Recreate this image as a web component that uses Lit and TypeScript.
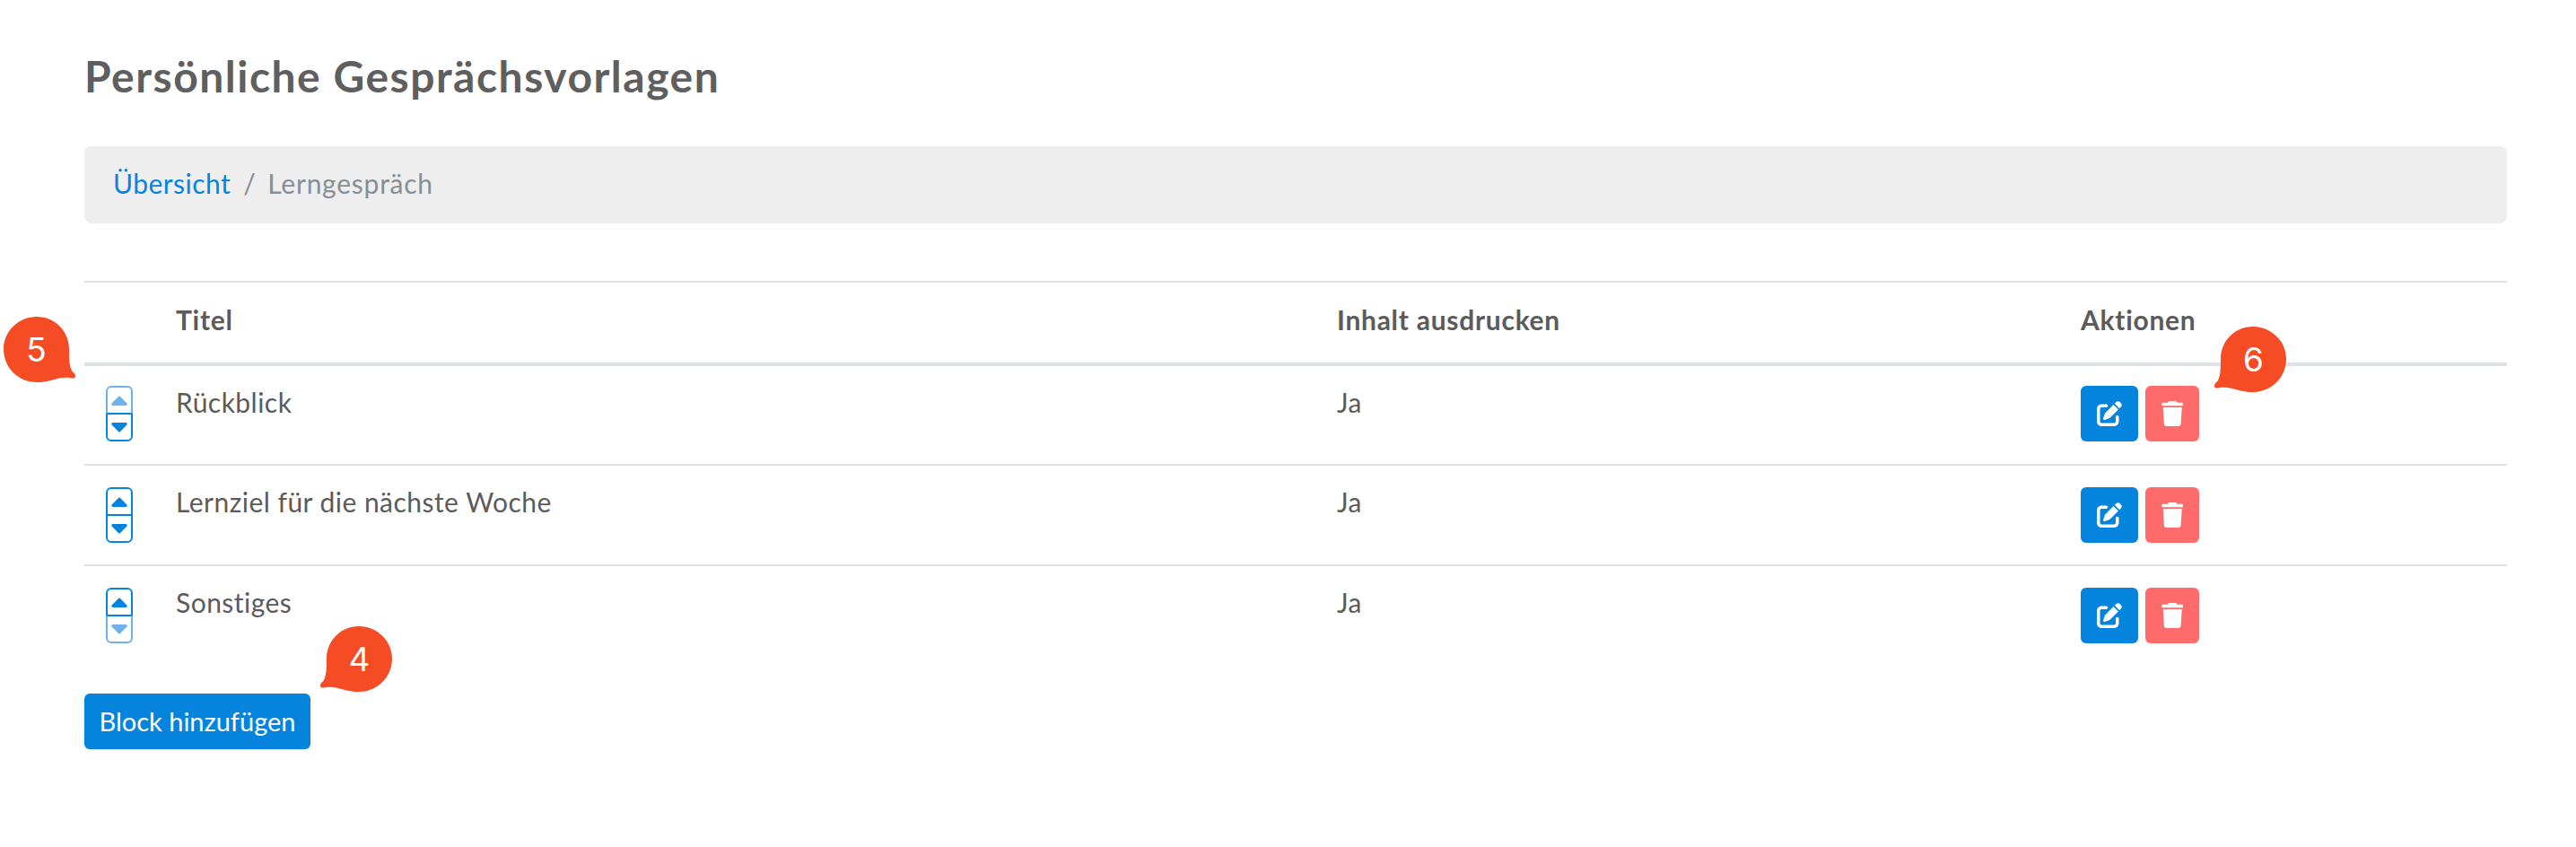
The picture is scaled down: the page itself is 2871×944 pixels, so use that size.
import { LitElement, html, css, svg } from "lit";
import { customElement } from "lit/decorators.js";

const rows = [
  { title: "Rückblick", print: "Ja", upOff: true, downOff: false },
  { title: "Lernziel für die nächste Woche", print: "Ja", upOff: false, downOff: false },
  { title: "Sonstiges", print: "Ja", upOff: false, downOff: true },
];

const editIcon = svg`<path d="M471.6 21.7c-21.9-21.9-57.3-21.9-79.2 0L362.3 51.7l97.9 97.9 30.1-30.1c21.9-21.9 21.9-57.3 0-79.2L471.6 21.7zm-299.2 220c-6.1 6.1-10.8 13.6-13.5 21.9l-29.6 88.8c-2.9 8.6-.6 18.1 5.8 24.6s15.9 8.7 24.6 5.8l88.8-29.6c8.2-2.7 15.7-7.4 21.9-13.5L437.7 172.3 339.7 74.3 172.4 241.7zM96 64C43 64 0 107 0 160V416c0 53 43 96 96 96H352c53 0 96-43 96-96V320c0-17.7-14.3-32-32-32s-32 14.3-32 32v96c0 17.7-14.3 32-32 32H96c-17.7 0-32-14.3-32-32V160c0-17.7 14.3-32 32-32h96c17.7 0 32-14.3 32-32s-14.3-32-32-32H96z"/>`;
const trashIcon = svg`<path d="M135.2 17.7L128 32H32C14.3 32 0 46.3 0 64S14.3 96 32 96H416c17.7 0 32-14.3 32-32s-14.3-32-32-32H320l-7.2-14.3C307.4 6.8 296.3 0 284.2 0H163.8c-12.1 0-23.2 6.8-28.6 17.7zM416 128H32L53.2 467c1.6 25.3 22.6 45 47.9 45H346.9c25.3 0 46.3-19.7 47.9-45L416 128z"/>`;

// speech bubble, tail at the lower right; .left mirrors it
const bubble = "M37 0C57 0 73 16 73 36C73 45 73 54 76 60C77 62 80 63 80 66C80 69 77 69 74 68C62 66 52 73 37 73C17 73 0 57 0 36C0 16 17 0 37 0Z";

@customElement("app-root")
export class AppRoot extends LitElement {
  static styles = css`
    :host {
      display: block;
      position: relative;
      height: 944px;
      box-sizing: border-box;
      padding: 59px 77px 0 94px;
      background: #fff;
      color: #5b5b5b;
      font-family: Lato, "Noto Sans", sans-serif;
      font-size: 30px;
      line-height: 1.45;
      letter-spacing: 0.47px;
    }

    h1 {
      margin: 0 0 53px;
      font-size: 48px;
      line-height: 51px;
      font-weight: 700;
      color: #5f5f5f;
      letter-spacing: 1.5px;
    }

    .crumbs {
      display: flex;
      align-items: center;
      height: 86px;
      padding: 0 32px 2px;
      background: #eeeeee;
      border-radius: 8px;
      margin-bottom: 64px;
      box-sizing: border-box;
    }

    .crumbs a {
      color: #0584de;
      text-decoration: none;
    }

    .crumbs .sep {
      color: #868e96;
      padding: 0 13px 0 14px;
    }

    .crumbs .current {
      color: #868e96;
      letter-spacing: 0.75px;
    }

    table {
      width: 100%;
      border-collapse: collapse;
      table-layout: fixed;
    }

    .c-sort { width: 78px; }
    .c-title { width: 1294px; }
    .c-print { width: 829px; }

    th {
      text-align: left;
      font-weight: 700;
      height: 92px;
      box-sizing: border-box;
      padding: 0 24px 5px;
      letter-spacing: 0.72px;
      border-top: 2px solid #dee2e6;
      border-bottom: 4px solid #dee2e6;
    }

    td {
      vertical-align: top;
      padding: 24px 24px 0;
      height: 112px;
      box-sizing: border-box;
      border-bottom: 2px solid #dee2e6;
    }

    td.txt {
      padding-top: 19px;
    }

    tbody tr:first-child td:not(.txt) {
      padding-top: 22px;
    }

    tr:last-child td {
      border-bottom: none;
    }

    .sort {
      display: flex;
      flex-direction: column;
      width: 30px;
      height: 62px;
      box-sizing: border-box;
      position: relative;
    }

    .sort span {
      flex: 1;
      display: flex;
      align-items: center;
      justify-content: center;
      box-sizing: border-box;
      border: 2px solid #0584de;
    }

    .sort span svg {
      width: 18px;
      height: 11px;
      fill: #0584de;
    }

    .sort .up {
      border-radius: 6px 6px 0 0;
      border-bottom: 1px solid #0584de;
    }

    .sort .down {
      border-radius: 0 0 6px 6px;
      border-top: 1px solid #0584de;
    }

    .sort .off {
      border-color: #6fb1ea;
    }

    .sort .off svg {
      fill: #6fb1ea;
    }

    .sort .up.off { border-bottom-color: #0584de; }
    .sort .down.off { border-top-color: #0584de; }

    .actions {
      display: flex;
      gap: 8px;
    }

    .btn {
      display: flex;
      align-items: center;
      justify-content: center;
      height: 62px;
      border-radius: 6px;
    }

    .btn.edit {
      width: 64px;
      background: #0584de;
    }

    .btn.del {
      width: 60px;
      background: #ff6b6b;
    }

    .btn svg {
      fill: #fff;
      height: 28px;
    }

    .add {
      display: block;
      margin-top: 31px;
      height: 62px;
      width: 252px;
      padding: 0;
      border: none;
      border-radius: 6px;
      background: #0584de;
      color: #fff;
      font: inherit;
      font-size: 29px;
      letter-spacing: 0;
    }

    .badge {
      position: absolute;
      width: 80px;
      height: 73px;
      display: flex;
      align-items: center;
      justify-content: center;
      color: #fff;
      font-family: Inter, sans-serif;
      font-size: 37px;
      line-height: 1;
      letter-spacing: 0;
    }

    .badge svg {
      position: absolute;
      inset: 0;
      width: 100%;
      height: 100%;
      fill: #f54c26;
    }

    .badge.left svg {
      transform: scaleX(-1);
    }

    .badge b {
      position: relative;
      font-weight: 400;
      width: 73px;
      text-align: center;
    }

    .badge.left b {
      margin-left: 7px;
    }

    .badge:not(.left) b {
      margin-right: 7px;
    }

    .b4 { left: 357px; top: 698px; }
    .b5 { left: 4px; top: 353px; }
    .b6 { left: 2468px; top: 364px; }
  `;

  private _caret(up: boolean) {
    const d = up
      ? "M8 1 Q9 0 10 1 L17.4 8.6 Q18.4 11 16 11 H2 Q-0.4 11 0.6 8.6 Z"
      : "M8 10 Q9 11 10 10 L17.4 2.4 Q18.4 0 16 0 H2 Q-0.4 0 0.6 2.4 Z";
    return html`<svg viewBox="0 0 18 11">${svg`<path d=${d}/>`}</svg>`;
  }

  private _row(r: (typeof rows)[number]) {
    return html`
      <tr>
        <td>
          <div class="sort">
            <span class="up ${r.upOff ? "off" : ""}">${this._caret(true)}</span>
            <span class="down ${r.downOff ? "off" : ""}">${this._caret(false)}</span>
          </div>
        </td>
        <td class="txt">${r.title}</td>
        <td class="txt">${r.print}</td>
        <td>
          <div class="actions">
            <div class="btn edit"><svg viewBox="0 0 512 512">${editIcon}</svg></div>
            <div class="btn del"><svg viewBox="0 0 448 512">${trashIcon}</svg></div>
          </div>
        </td>
      </tr>
    `;
  }

  private _badge(n: number, left: boolean) {
    return html`
      <div class="badge b${n} ${left ? "left" : ""}">
        <svg viewBox="0 0 80 73">${svg`<path d=${bubble}/>`}</svg>
        <b>${n}</b>
      </div>
    `;
  }

  render() {
    return html`
      <h1>Persönliche Gesprächsvorlagen</h1>
      <nav class="crumbs">
        <a href="#">Übersicht</a>
        <span class="sep">/</span>
        <span class="current">Lerngespräch</span>
      </nav>
      <table>
        <colgroup>
          <col class="c-sort" />
          <col class="c-title" />
          <col class="c-print" />
          <col />
        </colgroup>
        <thead>
          <tr>
            <th></th>
            <th>Titel</th>
            <th>Inhalt ausdrucken</th>
            <th>Aktionen</th>
          </tr>
        </thead>
        <tbody>${rows.map((r) => this._row(r))}</tbody>
      </table>
      <button class="add">Block hinzufügen</button>
      ${this._badge(5, false)} ${this._badge(6, true)} ${this._badge(4, true)}
    `;
  }
}
